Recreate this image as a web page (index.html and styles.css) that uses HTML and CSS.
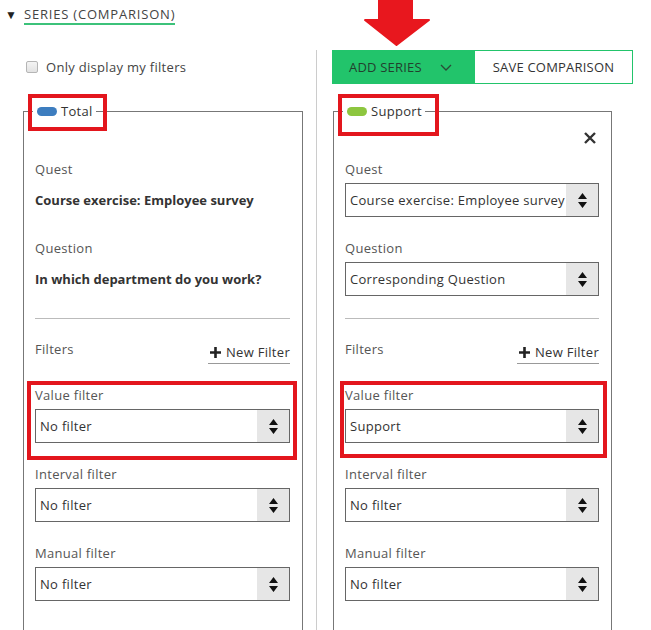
FILE: index.html
```html
<!DOCTYPE html>
<html lang="en">
<head>
  <meta charset="UTF-8">
  <meta name="viewport" content="width=device-width, initial-scale=1.0">
  <title>Series (comparison)</title>
  <link rel="stylesheet" href="styles.css">
</head>
<body>
  <div class="page">
    <!-- annotation arrow pointing at the add button -->
    <svg class="arrow-mark" width="66" height="46" viewBox="0 0 66 46">
      <path d="M15 0 H48 V20 H65 L32.5 45 L1 20 H15 Z" fill="#e8171e" stroke="#e8171e" stroke-width="2" stroke-linejoin="round"/>
    </svg>

    <div class="section-title">
      <span class="caret">&#9660;</span>
      <span class="title-link">SERIES (COMPARISON)</span>
    </div>

    <div class="columns">
      <div class="col col-left">
        <label class="only-mine"><input type="checkbox" class="check"> Only display my filters</label>

        <fieldset class="series">
          <legend class="series-name marked"><span class="pill pill-blue"></span>Total</legend>
          <div class="series-head"></div>

          <div class="field">
            <div class="field-label">Quest</div>
            <div class="field-text">Course exercise: Employee survey</div>
          </div>
          <div class="field">
            <div class="field-label">Question</div>
            <div class="field-text">In which department do you work?</div>
          </div>

          <hr class="divider">

          <div class="filters-row">
            <span class="field-label">Filters</span>
            <a class="new-filter" href="#"><svg class="plus" width="11" height="11" viewBox="0 0 11 11"><path d="M5.5 0 V11 M0 5.5 H11" stroke="#222" stroke-width="2.6"/></svg>New Filter</a>
          </div>

          <div class="field mark-box mark-left">
            <div class="field-label">Value filter</div>
            <div class="select"><span class="select-value">No filter</span><span class="stepper"><svg width="9" height="15" viewBox="0 0 9 15"><path d="M4.5 0 L9 6 H0 Z M0 9 H9 L4.5 15 Z" fill="#111"/></svg></span></div>
          </div>
          <div class="field">
            <div class="field-label">Interval filter</div>
            <div class="select"><span class="select-value">No filter</span><span class="stepper"><svg width="9" height="15" viewBox="0 0 9 15"><path d="M4.5 0 L9 6 H0 Z M0 9 H9 L4.5 15 Z" fill="#111"/></svg></span></div>
          </div>
          <div class="field">
            <div class="field-label">Manual filter</div>
            <div class="select"><span class="select-value">No filter</span><span class="stepper"><svg width="9" height="15" viewBox="0 0 9 15"><path d="M4.5 0 L9 6 H0 Z M0 9 H9 L4.5 15 Z" fill="#111"/></svg></span></div>
          </div>
        </fieldset>
      </div>

      <div class="col col-right">
        <div class="actions">
          <button class="btn btn-add">ADD SERIES
            <svg class="chev" width="12" height="7" viewBox="0 0 12 7"><path d="M1 1 L6 6 L11 1" fill="none" stroke="#2a4a36" stroke-width="1.3"/></svg>
          </button>
          <button class="btn btn-save">SAVE COMPARISON</button>
        </div>

        <fieldset class="series">
          <legend class="series-name marked marked-wide"><span class="pill pill-green"></span>Support</legend>
          <div class="series-head">
            <svg class="close" width="12" height="12" viewBox="0 0 12 12"><path d="M1 1 L11 11 M11 1 L1 11" stroke="#333" stroke-width="2.4"/></svg>
          </div>

          <div class="field">
            <div class="field-label">Quest</div>
            <div class="select"><span class="select-value">Course exercise: Employee survey</span><span class="stepper"><svg width="9" height="15" viewBox="0 0 9 15"><path d="M4.5 0 L9 6 H0 Z M0 9 H9 L4.5 15 Z" fill="#111"/></svg></span></div>
          </div>
          <div class="field">
            <div class="field-label">Question</div>
            <div class="select"><span class="select-value">Corresponding Question</span><span class="stepper"><svg width="9" height="15" viewBox="0 0 9 15"><path d="M4.5 0 L9 6 H0 Z M0 9 H9 L4.5 15 Z" fill="#111"/></svg></span></div>
          </div>

          <hr class="divider">

          <div class="filters-row">
            <span class="field-label">Filters</span>
            <a class="new-filter" href="#"><svg class="plus" width="11" height="11" viewBox="0 0 11 11"><path d="M5.5 0 V11 M0 5.5 H11" stroke="#222" stroke-width="2.6"/></svg>New Filter</a>
          </div>

          <div class="field mark-box mark-right">
            <div class="field-label">Value filter</div>
            <div class="select"><span class="select-value">Support</span><span class="stepper"><svg width="9" height="15" viewBox="0 0 9 15"><path d="M4.5 0 L9 6 H0 Z M0 9 H9 L4.5 15 Z" fill="#111"/></svg></span></div>
          </div>
          <div class="field">
            <div class="field-label">Interval filter</div>
            <div class="select"><span class="select-value">No filter</span><span class="stepper"><svg width="9" height="15" viewBox="0 0 9 15"><path d="M4.5 0 L9 6 H0 Z M0 9 H9 L4.5 15 Z" fill="#111"/></svg></span></div>
          </div>
          <div class="field">
            <div class="field-label">Manual filter</div>
            <div class="select"><span class="select-value">No filter</span><span class="stepper"><svg width="9" height="15" viewBox="0 0 9 15"><path d="M4.5 0 L9 6 H0 Z M0 9 H9 L4.5 15 Z" fill="#111"/></svg></span></div>
          </div>
        </fieldset>
      </div>
    </div>
  </div>
</body>
</html>
```

FILE: styles.css
```css
body {
  margin: 0;
  font-family: "Open Sans", Arial, sans-serif;
  font-size: 13px;
  letter-spacing: 0.3px;
  color: #333;
  background: #fff;
}

.page {
  position: relative;
  height: 630px;
  overflow: hidden;
}

/* red annotation arrow over the top of the page */
.arrow-mark {
  position: absolute;
  left: 364px;
  top: 0;
}

.section-title {
  height: 50px;
  padding: 6px 0 0 5px;
  box-sizing: border-box;
  display: flex;
  align-items: flex-start;
}
.caret {
  font-size: 12px;
  line-height: 17px;
  width: 19px;
  color: #222;
}
.title-link {
  line-height: 17px;
  letter-spacing: 0.8px;
  color: #444;
  border-bottom: 2px solid #3cc27a;
}

.columns {
  display: grid;
  grid-template-columns: 317px 1fr;
}

.col-left {
  border-right: 1px solid #ccc;
  padding-left: 23px;
}
.col-right {
  padding-left: 15px;
}

.only-mine {
  display: flex;
  align-items: center;
  height: 18px;
  margin: 8px 0 26px 3px;
  color: #444;
}
.check {
  appearance: none;
  width: 12px;
  height: 12px;
  margin: 0 8px 0 0;
  border: 1px solid #b5b5b5;
  border-radius: 2px;
  background: linear-gradient(#f4f4f4, #e2e2e2);
}

.actions {
  display: flex;
  height: 34px;
  margin-bottom: 18px;
}
.btn {
  font-family: inherit;
  font-size: 13px;
  letter-spacing: 0.2px;
  border: 1px solid #22c46b;
  margin: 0;
  cursor: pointer;
}
.btn-add {
  width: 142px;
  background: #22c46b;
  color: #22402e;
  display: flex;
  align-items: center;
  padding: 0 0 0 16px;
}
.chev {
  margin-left: 18px;
}
.btn-save {
  width: 159px;
  background: #fff;
  color: #333;
}

.series {
  width: 280px;
  box-sizing: border-box;
  margin: 0;
  padding: 0 12px 40px 11px;
  border: 1px solid #777;
}
.col-right .series {
  width: 279px;
  margin-left: 1px;
}

.series-name {
  position: relative;
  display: flex;
  align-items: center;
  height: 18px;
  padding: 0 3px 0 4px;
  margin-left: -2px;
  color: #333;
}
.pill {
  display: inline-block;
  width: 20px;
  height: 9px;
  border-radius: 5px;
  margin-right: 4px;
}
.pill-blue {
  background: #3d7dbf;
}
.pill-green {
  background: #8dc63f;
}

/* red annotation rectangles */
.marked::after,
.mark-box::after {
  content: "";
  position: absolute;
  border: 4px solid #e3161d;
}
.marked::after {
  left: -5px;
  right: -11px;
  top: -8px;
  bottom: -11px;
}
.marked-wide::after {
  right: -14px;
  bottom: -16px;
}
.mark-box {
  position: relative;
}
.mark-left::after {
  left: -8px;
  right: -7px;
  top: -5px;
  bottom: -17px;
}
.mark-right::after {
  left: -5px;
  right: -8px;
  top: -5px;
  bottom: -15px;
}

.series-head {
  height: 40px;
  display: flex;
  justify-content: flex-end;
  align-items: flex-start;
}
.close {
  margin: 12px 3px 0 0;
}

.field {
  margin-bottom: 22px;
}
.field-label {
  line-height: 18px;
  color: #555;
  margin-bottom: 5px;
}
.field-text {
  height: 34px;
  line-height: 34px;
  font-weight: 700;
  letter-spacing: 0;
  color: #333;
  white-space: nowrap;
}

.select {
  display: flex;
  height: 34px;
  box-sizing: border-box;
  border: 1px solid #666;
}
.select-value {
  flex: 1;
  line-height: 32px;
  padding-left: 4px;
  white-space: nowrap;
  overflow: hidden;
  color: #333;
}
.stepper {
  width: 32px;
  background: #e6e6e6;
  display: flex;
  align-items: center;
  justify-content: center;
}

.divider {
  border: 0;
  border-top: 1px solid #bbb;
  margin: 0 0 21px;
}

.filters-row {
  display: flex;
  justify-content: space-between;
  align-items: flex-start;
  height: 24px;
  margin-bottom: 22px;
}
.filters-row .field-label {
  margin: 0;
}
.new-filter {
  display: flex;
  align-items: center;
  margin-top: 3px;
  height: 18px;
  padding: 0 0 2px 2px;
  border-bottom: 1px solid #999;
  color: #333;
  text-decoration: none;
}
.plus {
  margin-right: 5px;
}
```
